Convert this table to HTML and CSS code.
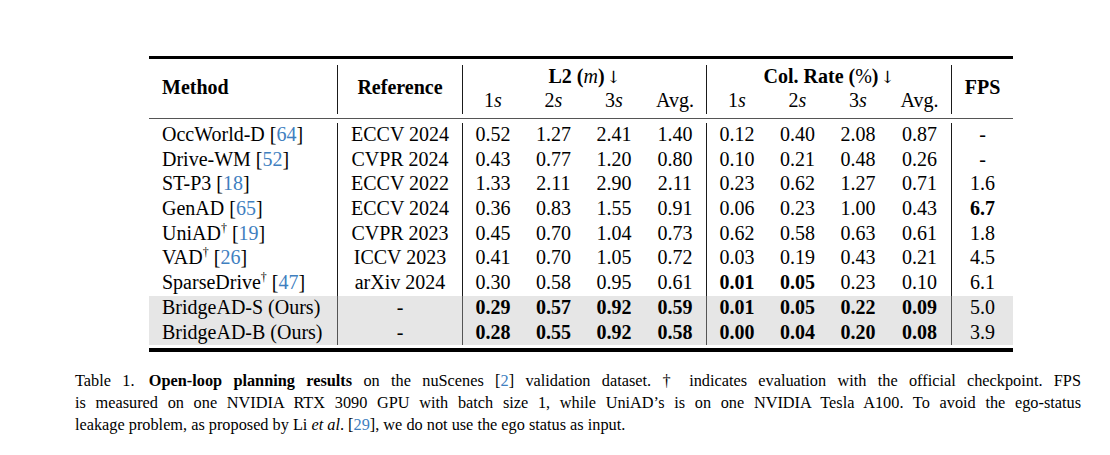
FILE: index.html
```html
<!DOCTYPE html>
<html>
<head>
<meta charset="utf-8">
<link rel="stylesheet" href="styles.css">
</head>
<body>
<div class="page">
  <table class="results">
    <colgroup>
      <col style="width:189px"><col style="width:125px">
      <col style="width:60px"><col style="width:61px"><col style="width:60px"><col style="width:63px">
      <col style="width:60px"><col style="width:61px"><col style="width:60px"><col style="width:64px">
      <col style="width:61px">
    </colgroup>
    <tr class="sp sp-top"><td colspan="11"></td></tr>
    <tr class="head1">
      <th rowspan="2" class="method vl">Method</th>
      <th rowspan="2" class="vl">Reference</th>
      <th colspan="4" class="vl group">L2 (<i class="m">m</i>)&#8202;<span class="arrow">↓</span></th>
      <th colspan="4" class="vl group">Col. Rate (<span class="m">%</span>)&#8202;<span class="arrow">↓</span></th>
      <th rowspan="2">FPS</th>
    </tr>
    <tr class="head2">
      <td>1<i>s</i></td><td>2<i>s</i></td><td>3<i>s</i></td><td class="vl">Avg.</td>
      <td>1<i>s</i></td><td>2<i>s</i></td><td>3<i>s</i></td><td class="vl">Avg.</td>
    </tr>
    <tr class="sp sp-mid"><td colspan="11"></td></tr>
    <tr class="sp sp-below"><td colspan="11"></td></tr>
    <tr>
      <td class="method vl">OccWorld-D <span class="cite">[<a>64</a>]</span></td><td class="vl">ECCV 2024</td>
      <td>0.52</td><td>1.27</td><td>2.41</td><td class="vl">1.40</td>
      <td>0.12</td><td>0.40</td><td>2.08</td><td class="vl">0.87</td><td>-</td>
    </tr>
    <tr>
      <td class="method vl">Drive-WM <span class="cite">[<a>52</a>]</span></td><td class="vl">CVPR 2024</td>
      <td>0.43</td><td>0.77</td><td>1.20</td><td class="vl">0.80</td>
      <td>0.10</td><td>0.21</td><td>0.48</td><td class="vl">0.26</td><td>-</td>
    </tr>
    <tr>
      <td class="method vl">ST-P3 <span class="cite">[<a>18</a>]</span></td><td class="vl">ECCV 2022</td>
      <td>1.33</td><td>2.11</td><td>2.90</td><td class="vl">2.11</td>
      <td>0.23</td><td>0.62</td><td>1.27</td><td class="vl">0.71</td><td>1.6</td>
    </tr>
    <tr>
      <td class="method vl">GenAD <span class="cite">[<a>65</a>]</span></td><td class="vl">ECCV 2024</td>
      <td>0.36</td><td>0.83</td><td>1.55</td><td class="vl">0.91</td>
      <td>0.06</td><td>0.23</td><td>1.00</td><td class="vl">0.43</td><td><b>6.7</b></td>
    </tr>
    <tr>
      <td class="method vl">UniAD<sup>†</sup> <span class="cite">[<a>19</a>]</span></td><td class="vl">CVPR 2023</td>
      <td>0.45</td><td>0.70</td><td>1.04</td><td class="vl">0.73</td>
      <td>0.62</td><td>0.58</td><td>0.63</td><td class="vl">0.61</td><td>1.8</td>
    </tr>
    <tr>
      <td class="method vl">VAD<sup>†</sup> <span class="cite">[<a>26</a>]</span></td><td class="vl">ICCV 2023</td>
      <td>0.41</td><td>0.70</td><td>1.05</td><td class="vl">0.72</td>
      <td>0.03</td><td>0.19</td><td>0.43</td><td class="vl">0.21</td><td>4.5</td>
    </tr>
    <tr>
      <td class="method vl">SparseDrive<sup>†</sup> <span class="cite">[<a>47</a>]</span></td><td class="vl">arXiv 2024</td>
      <td>0.30</td><td>0.58</td><td>0.95</td><td class="vl">0.61</td>
      <td><b>0.01</b></td><td><b>0.05</b></td><td>0.23</td><td class="vl">0.10</td><td>6.1</td>
    </tr>
    <tr class="ours">
      <td class="method vl">BridgeAD-S (Ours)</td><td class="vl">-</td>
      <td><b>0.29</b></td><td><b>0.57</b></td><td><b>0.92</b></td><td class="vl"><b>0.59</b></td>
      <td><b>0.01</b></td><td><b>0.05</b></td><td><b>0.22</b></td><td class="vl"><b>0.09</b></td><td>5.0</td>
    </tr>
    <tr class="ours">
      <td class="method vl">BridgeAD-B (Ours)</td><td class="vl">-</td>
      <td><b>0.28</b></td><td><b>0.55</b></td><td><b>0.92</b></td><td class="vl"><b>0.58</b></td>
      <td><b>0.00</b></td><td><b>0.04</b></td><td><b>0.20</b></td><td class="vl"><b>0.08</b></td><td>3.9</td>
    </tr>
    <tr class="sp sp-bottom"><td colspan="11"></td></tr>
  </table>
  <p class="caption"><span class="line just"><span class="label">Table 1.</span> <b>Open-loop planning results</b> on the nuScenes <span class="cite">[<a>2</a>]</span> validation dataset. † indicates evaluation with the official checkpoint. FPS</span>
  <span class="line just">is measured on one NVIDIA RTX 3090 GPU with batch size 1, while UniAD’s is on one NVIDIA Tesla A100. To avoid the ego-status</span>
  <span class="line">leakage problem, as proposed by Li <i>et al</i>. <span class="cite">[<a>29</a>]</span>, we do not use the ego status as input.</span></p>
</div>
</body>
</html>
```

FILE: styles.css
```css
html, body {
  margin: 0;
  padding: 0;
  background: #ffffff;
}

body {
  font-family: "Liberation Serif", "Times New Roman", serif;
  color: #000000;
}

.page {
  padding: 56px 0 0 75px;
}

.results {
  margin-left: 74px;
  width: 864px;
  table-layout: fixed;
  border-collapse: separate;
  border-spacing: 0;
  border-top: 3px solid #000;
  border-bottom: 4px solid #000;
  font-size: 20px;
}

.results th,
.results td {
  padding: 0;
  text-align: center;
  vertical-align: top;
  line-height: 23px;
  height: 24.7px;
  white-space: nowrap;
  font-weight: normal;
}

.results th {
  font-weight: bold;
}

.results .vl {
  border-right: 1px solid #1a1a1a;
}

.results .method {
  text-align: left;
  padding-left: 13px;
}

.results th[rowspan] {
  vertical-align: middle;
  padding-bottom: 4px;
}

.head1 th {
  height: 23px;
}

.head1 th[rowspan] {
  height: auto;
}

.head2 td {
  height: 25px;
}

.m {
  font-weight: normal;
}

i.m {
  font-style: italic;
}

.arrow {
  font-weight: normal;
  font-family: "DejaVu Serif", "Liberation Serif", serif;
  font-size: 17px;
}

.results .sp td {
  height: auto;
  line-height: 0;
  font-size: 0;
  padding: 0;
  border: 0;
}

.results .sp-top td {
  height: 6px;
}

.results .sp-mid td {
  height: 4px;
  border-bottom: 1px solid #555;
}

.results .sp-below td {
  height: 4px;
}

.results .sp-bottom td {
  height: 3px;
}

.ours td {
  background: #e6e6e6;
}

.ours td.vl {
  border-right-color: #555;
}

.cite a {
  color: #3f7fbf;
}

sup {
  font-size: 12px;
  line-height: 0;
  vertical-align: 8px;
}

.caption {
  margin: 18px 0 0 0;
  width: 1006px;
  font-size: 16.3px;
  line-height: 22px;
}

.caption .line {
  display: block;
  white-space: nowrap;
}

.caption .just {
  text-align: justify;
  text-align-last: justify;
  white-space: normal;
}

.caption .label {
  margin-right: 3px;
}
```
